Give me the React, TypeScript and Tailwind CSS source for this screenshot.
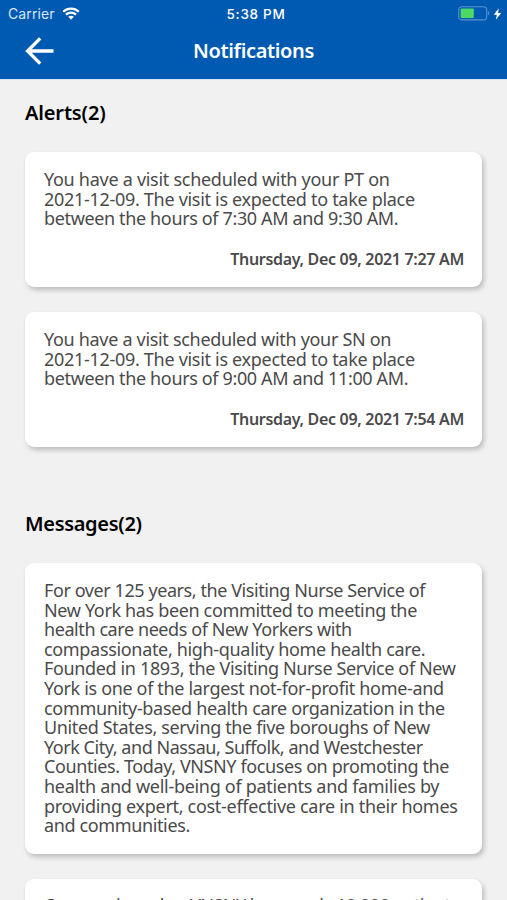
import React from 'react';

type Line = { text: string; fit: string };

const alerts: { lines: Line[]; date: string }[] = [
  {
    lines: [
      { text: 'You have a visit scheduled with your PT on', fit: 'tracking-[-0.28px]' },
      { text: '2021-12-09. The visit is expected to take place', fit: 'tracking-[-0.3px]' },
      { text: 'between the hours of 7:30 AM and 9:30 AM.', fit: 'tracking-[-0.36px]' },
    ],
    date: 'Thursday, Dec 09, 2021 7:27 AM',
  },
  {
    lines: [
      { text: 'You have a visit scheduled with your SN on', fit: 'tracking-[-0.31px]' },
      { text: '2021-12-09. The visit is expected to take place', fit: 'tracking-[-0.3px]' },
      { text: 'between the hours of 9:00 AM and 11:00 AM.', fit: 'tracking-[-0.36px]' },
    ],
    date: 'Thursday, Dec 09, 2021 7:54 AM',
  },
];

const message: Line[] = [
  { text: 'For over 125 years, the Visiting Nurse Service of', fit: 'tracking-[-0.42px]' },
  { text: 'New York has been committed to meeting the', fit: 'tracking-[-0.35px]' },
  { text: 'health care needs of New Yorkers with', fit: 'tracking-[-0.42px]' },
  { text: 'compassionate, high-quality home health care.', fit: 'tracking-[-0.33px]' },
  { text: 'Founded in 1893, the Visiting Nurse Service of New', fit: 'tracking-[-0.36px]' },
  { text: 'York is one of the largest not-for-profit home-and', fit: 'tracking-[-0.34px]' },
  { text: 'community-based health care organization in the', fit: 'tracking-[-0.32px]' },
  { text: 'United States, serving the five boroughs of New', fit: 'tracking-[-0.36px]' },
  { text: 'York City, and Nassau, Suffolk, and Westchester', fit: 'tracking-[-0.46px]' },
  { text: 'Counties. Today, VNSNY focuses on promoting the', fit: 'tracking-[-0.4px]' },
  { text: 'health and well-being of patients and families by', fit: 'tracking-[-0.3px]' },
  { text: 'providing expert, cost-effective care in their homes', fit: 'tracking-[-0.3px]' },
  { text: 'and communities.', fit: 'tracking-[-0.37px]' },
];

const nextMessage: Line[] = [
  { text: 'On any given day, VNSNY has nearly 10,000 patients', fit: 'tracking-[-0.5px]' },
];

const card =
  'rounded-[9px] bg-white pl-[19px] pr-[18px] shadow-[2px_3px_5px_rgba(0,0,0,0.22)]';

function Lines({ lines }: { lines: Line[] }) {
  return (
    <p className="text-[18px] leading-[19.6px] text-[#4a4a4a]">
      {lines.map((l) => (
        <span key={l.text} className={`block whitespace-nowrap ${l.fit}`}>
          {l.text}
        </span>
      ))}
    </p>
  );
}

function StatusBar() {
  return (
    <div className="grid h-[27px] grid-cols-3 items-center pl-[8px] pr-[5px] font-['Inter',sans-serif] text-[13.5px] leading-[16px]">
      <div className="flex items-center gap-[7px]">
        <span className="text-[14px] tracking-[0.1px] text-[#d7e6f7]">Carrier</span>
        <svg width="18" height="13" viewBox="0 0 18 13" fill="none" stroke="white" strokeWidth="2.2">
          <path d="M1.2 4.7C5.6.5 12.4.5 16.8 4.7" />
          <path d="M4 7.6c2.8-2.6 7.2-2.6 10 0" />
          <path d="M6.2 9.8c1.6-1.4 4-1.4 5.6 0L9 12.7z" fill="white" stroke="none" />
        </svg>
      </div>
      <span className="whitespace-nowrap pl-[2px] text-center font-medium tracking-[0.7px]">5:38 PM</span>
      <div className="flex items-center justify-end gap-[3px]">
        <svg width="32" height="15" viewBox="0 0 32 15">
          <rect x="0.7" y="0.7" width="28" height="13.2" rx="3.2" fill="none" stroke="#5a92d0" strokeWidth="1.1" />
          <rect x="2.6" y="2.6" width="13.2" height="9.4" rx="1" fill="#4cd964" />
          <path d="M30.2 5v4.6c1.7-.8 1.7-3.8 0-4.6z" fill="#5a92d0" />
        </svg>
        <svg width="9" height="12" viewBox="0 0 9 12">
          <path d="M5.8.2.8 6.8h3L2.8 11.8 8.2 5H5z" fill="white" />
        </svg>
      </div>
    </div>
  );
}

export default function App() {
  return (
    <div className="flex h-[900px] w-[507px] flex-col overflow-hidden bg-[#f1f1f1] font-['Noto_Sans',sans-serif]">
      <header className="h-[79px] shrink-0 bg-[#005ab1] text-white shadow-[0_1px_0_#d3e4f5]">
        <StatusBar />
        <div className="grid h-[47px] grid-cols-[1fr_auto_1fr] items-center px-[25px]">
          <svg width="30" height="28" viewBox="0 0 30 28" fill="none" stroke="white" strokeWidth="3.4">
            <path d="M28.5 14H3M15.2 1.4 2.6 14l12.6 12.6" />
          </svg>
          <h1 className="text-[20px] font-semibold leading-[24px] tracking-[-0.35px]">Notifications</h1>
        </div>
      </header>
      <main className="flex flex-col px-[25px]">
        <h2 className="mt-[21px] h-[26px] text-[20px] font-semibold leading-[26px] tracking-[-0.15px] text-black">
          Alerts(2)
        </h2>
        <div className="mt-[26px] flex flex-col gap-[25px]">
          {alerts.map((a) => (
            <article key={a.date} className={`h-[135px] pt-[18px] ${card}`}>
              <Lines lines={a.lines} />
              <p className="mt-[19px] whitespace-nowrap text-right text-[16px] font-semibold leading-[22px] tracking-[-0.31px] text-[#4a4a4a]">
                {a.date}
              </p>
            </article>
          ))}
        </div>
        <h2 className="mt-[64px] h-[26px] text-[20px] font-semibold leading-[26px] tracking-[-0.32px] text-black">
          Messages(2)
        </h2>
        <div className="mt-[26px] flex flex-col gap-[25px]">
          <article className={`h-[291px] pt-[18px] ${card}`}>
            <Lines lines={message} />
          </article>
          <article className={`h-[200px] pt-[17px] ${card}`}>
            <Lines lines={nextMessage} />
          </article>
        </div>
      </main>
    </div>
  );
}
